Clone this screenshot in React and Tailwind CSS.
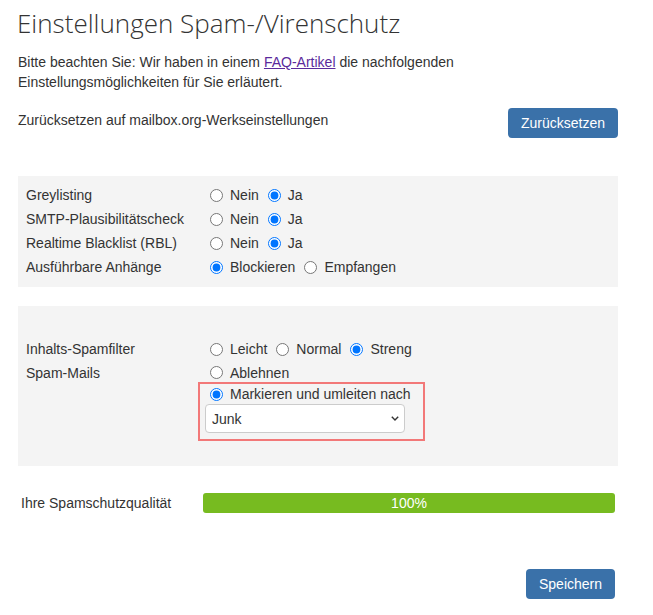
import React from "react";

function Radio({ name, label, checked, first }) {
  return (
    <label className={"flex items-center " + (first ? "" : "ml-[9px]")}>
      <input type="radio" name={name} defaultChecked={checked} className="m-0 w-[13px] h-[13px]" />
      <span className="ml-[7px]">{label}</span>
    </label>
  );
}

function Row({ label, name, options, checked }) {
  return (
    <div className="flex h-[24px] items-center">
      <div className="w-[172px]">{label}</div>
      <div className="flex items-center pl-[12px]">
        {options.map((o, i) => (
          <Radio key={o} name={name} label={o} checked={i === checked} first={i === 0} />
        ))}
      </div>
    </div>
  );
}

export default function App() {
  return (
    <div className="min-h-[615px] bg-white text-[#333] text-[14px] leading-[20px]" style={{ fontFamily: '"Liberation Sans", Arial, sans-serif' }}>
      <div className="ml-[18px] w-[600px]">
        <h1 className="pt-[5px] -ml-[1px] text-[26px] leading-[36px] font-light text-[#333]" style={{ fontFamily: '"Open Sans", sans-serif' }}>
          Einstellungen Spam-/Virenschutz
        </h1>
        <p className="mt-[11px] w-[460px]">
          Bitte beachten Sie: Wir haben in einem{" "}
          <a href="#" className="text-[#5b2a9c] underline">FAQ-Artikel</a>{" "}
          die nachfolgenden Einstellungsmöglichkeiten für Sie erläutert.
        </p>
        <div className="mt-[16px] flex items-start justify-between">
          <div className="pt-[2px]">Zurücksetzen auf mailbox.org-Werkseinstellungen</div>
          <button className="w-[110px] h-[30px] rounded-[4px] bg-[#3a71a9] text-white text-[14px]">Zurücksetzen</button>
        </div>

        <div className="mt-[38px] bg-[#f4f4f4] pt-[7px] pb-[8px] pl-[8px]">
          <Row label="Greylisting" name="grey" options={["Nein", "Ja"]} checked={1} />
          <Row label="SMTP-Plausibilitätscheck" name="smtp" options={["Nein", "Ja"]} checked={1} />
          <Row label="Realtime Blacklist (RBL)" name="rbl" options={["Nein", "Ja"]} checked={1} />
          <Row label="Ausführbare Anhänge" name="att" options={["Blockieren", "Empfangen"]} checked={0} />
        </div>

        <div className="mt-[19px] bg-[#f4f4f4] pt-[31px] pb-[25px] pl-[8px]">
          <Row label="Inhalts-Spamfilter" name="filter" options={["Leicht", "Normal", "Streng"]} checked={2} />
          <div className="flex items-start">
            <div className="w-[172px] h-[24px] flex items-center">Spam-Mails</div>
            <div className="flex flex-col">
              <div className="mt-[2px] h-[19px] flex items-center pl-[12px]">
                <Radio name="mails" label="Ablehnen" checked={false} first />
              </div>
              <div className="w-[227px] border-2 border-[#f27878] pb-[6px]">
                <div className="h-[20px] flex items-center pl-[10px]">
                  <Radio name="mails" label="Markieren und umleiten nach" checked first />
                </div>
                <div className="relative ml-[5px] w-[200px] h-[29px]">
                  <select className="appearance-none w-full h-full bg-white border border-[#cccccc] rounded-[4px] pl-[6px] text-[14px] text-[#333] outline-none">
                    <option>Junk</option>
                  </select>
                  <svg className="absolute right-[6px] top-[12px] pointer-events-none" width="8" height="5" viewBox="0 0 8 5">
                    <path d="M0.8 0.8 L4 4 L7.2 0.8" fill="none" stroke="#333" strokeWidth="1.4" />
                  </svg>
                </div>
              </div>
            </div>
          </div>
        </div>

        <div className="mt-[27px] flex items-center px-[3px]">
          <div className="w-[182px]">Ihre Spamschutzqualität</div>
          <div className="flex-1 h-[20px] rounded-[3px] bg-[#77bb20] text-white text-[14px] leading-[20px] text-center">100%</div>
        </div>

        <div className="mt-[56px] flex justify-end pr-[3px]">
          <button className="w-[89px] h-[30px] rounded-[4px] bg-[#3a71a9] text-white text-[14px]">Speichern</button>
        </div>
      </div>
    </div>
  );
}
